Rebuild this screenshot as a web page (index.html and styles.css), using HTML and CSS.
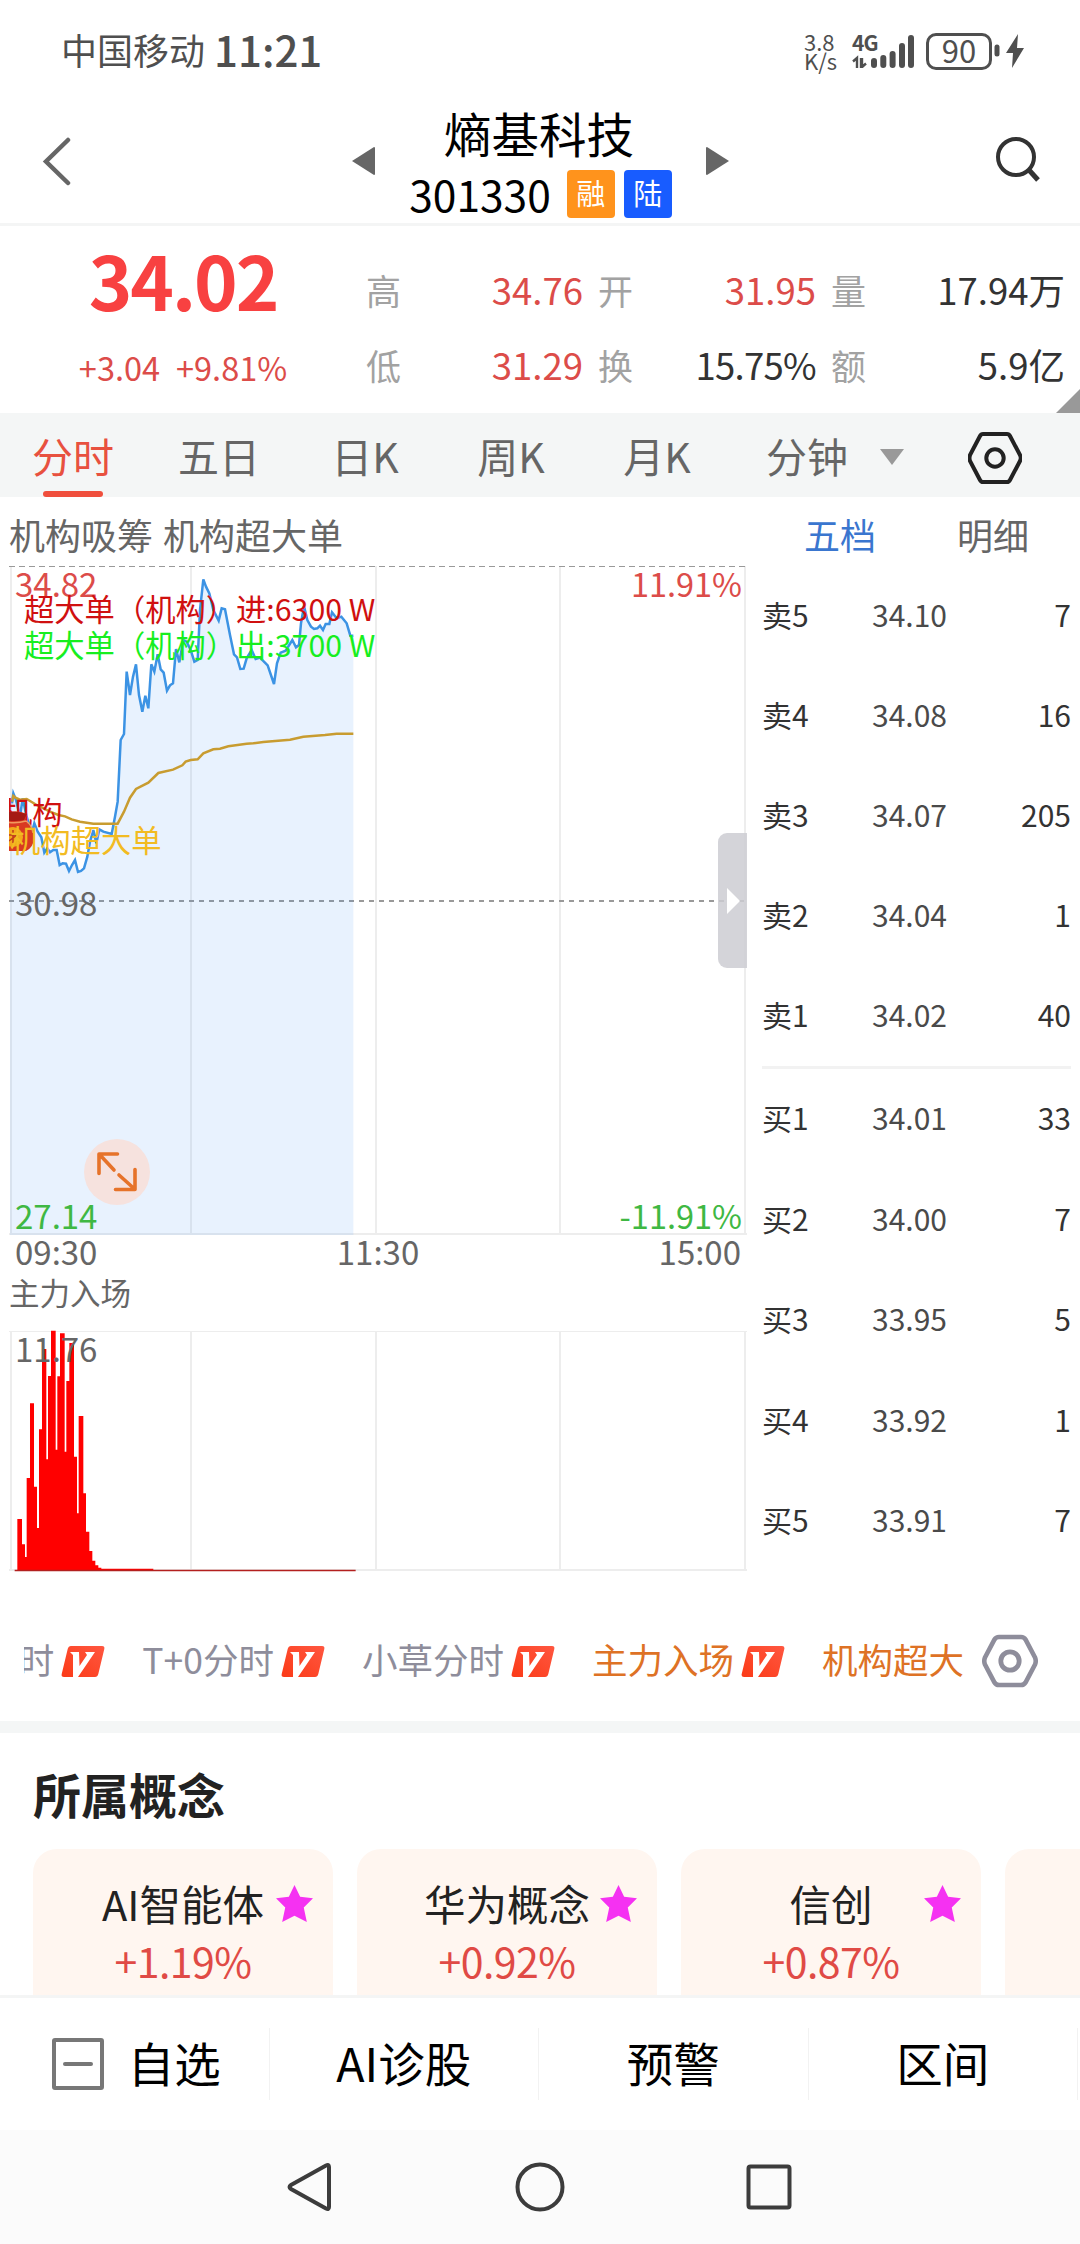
FILE: index.html
```html
<!DOCTYPE html>
<html lang="zh-CN">
    <head>
        <meta charset="utf-8" />
        <title>熵基科技 301330</title>
        <link rel="stylesheet" href="styles.css">
    </head>
    <body>
        <!-- 状态栏 -->
        <div class="status-bar">
            <span class="carrier">中国移动</span>
            <span class="time">11:21</span>
            <div class="speed"><span>3.8</span><span>K/s</span></div>
            <svg class="signal" width="64" height="38" viewBox="0 0 64 38">
                <text x="0" y="17" class="net">4G</text>
                <path d="M1 27.500l4-3.500v10M9 24v10M10 34V24M10 33l4-3.500" fill="none" stroke="#4f4f4f" stroke-width="2.400"/>
                <path d="M22 27v4M31.300 24v7M40.600 20v11M50 12v19M59 4v27" stroke="#4f4f4f" stroke-width="6" stroke-linecap="round"/>
            </svg>
            <div class="battery">90</div>
            <svg class="charge" width="30" height="36" viewBox="0 0 30 36">
                <path d="M3 14v7" stroke="#4f4f4f" stroke-width="5" stroke-linecap="round"/>
                <path d="M24 1L12 20h7l-1 15 12-20h-7z" fill="#4f4f4f"/>
            </svg>
        </div>

        <!-- 标题 -->
        <div class="header">
            <svg class="back" width="30" height="50" viewBox="0 0 30 50">
                <path d="M26 4L4 25.500 26 47" fill="none" stroke="#666" stroke-width="4.500" stroke-linecap="round"/>
            </svg>
            <svg class="prev" width="24" height="30" viewBox="0 0 24 30"><path d="M0 15L22 1q1 0 1 1v26q0 1-1 1z" fill="#666"/></svg>
            <div class="stock">
                <div class="stock-name">熵基科技</div>
                <div class="stock-code">301330<span class="badge orange">融</span><span class="badge blue">陆</span></div>
            </div>
            <svg class="next" width="24" height="30" viewBox="0 0 24 30"><path d="M24 15L2 1Q1 1 1 2v26q0 1 1 1z" fill="#666"/></svg>
            <svg class="search" width="46" height="46" viewBox="0 0 46 46">
                <circle cx="21" cy="20" r="18" fill="none" stroke="#333" stroke-width="4"/>
                <path d="M34 33l9 10" stroke="#333" stroke-width="5"/>
            </svg>
        </div>

        <!-- 行情 -->
        <div class="quote">
            <div class="price-box">
                <div class="price">34.02</div>
                <div class="change"><span>+3.04</span><span>+9.81%</span></div>
            </div>
            <div class="quote-grid">
                <div class="cell"><span class="key">高</span><span class="red">34.76</span></div>
                <div class="cell"><span class="key">开</span><span class="red">31.95</span></div>
                <div class="cell"><span class="key">量</span><span>17.94万</span></div>
                <div class="cell"><span class="key">低</span><span class="red">31.29</span></div>
                <div class="cell"><span class="key">换</span><span class="turnover">15.75%</span></div>
                <div class="cell"><span class="key">额</span><span>5.9亿</span></div>
            </div>
            <div class="corner"></div>
        </div>

        <!-- 周期切换 -->
        <div class="period-tabs">
            <div class="tab active">分时</div>
            <div class="tab">五日</div>
            <div class="tab">日K</div>
            <div class="tab">周K</div>
            <div class="tab">月K</div>
            <div class="tab minute">分钟<i class="arrow-down"></i></div>
            <svg class="setting" width="54" height="54" viewBox="0 0 54 54">
                <path d="M15 3h24q2 0 3 2l10 19q1.500 3 0 6L42 49q-1 2-3 2H15q-2 0-3-2L2 30q-1-3 0-6L12 5q1-2 3-2z" fill="none" stroke="#222" stroke-width="4"/>
                <circle cx="27" cy="27" r="8.700" fill="none" stroke="#222" stroke-width="4"/>
            </svg>
        </div>

        <div class="main">
            <div class="chart-col">
                <div class="indicator">机构吸筹 机构超大单</div>
                <!-- 分时图 -->
                <div class="chart-wrap">
                    <svg class="price-chart" width="747" height="672" viewBox="0 564 747 672">
                        <g stroke="#ededed" stroke-width="2">
                            <path d="M11 566v668M191 566v668M376 566v668M560 566v668M745 566v668M9 1234h738"/>
                        </g>
                        <path d="M9 566.500H747" stroke="#999" stroke-width="1.200" stroke-dasharray="6 4"/>
                        <path d="M9 901H747" stroke="#999" stroke-width="2" stroke-dasharray="5 5"/>
                        <g transform="translate(0 550) scale(.33333)">
                            <path class="area" d="M30 760L40 730 48 750 60 800 68 745 80 800 95 850 103 820 113 845 124 862 133 908 142 895 150 907 160 900 170 900 179 945 188 940 198 941 207 963 216 945 225 930 234 966 243 963 252 955 262 920 270 875 280 840 289 880 298 838 310 845 335 852 345 800 353 755 362 570 372 552 380 365 390 435 399 380 408 343 417 435 427 485 436 437 445 475 454 343 463 365 473 313 482 358 491 368 501 422 510 406 519 400 528 297 538 337 550 270 560 275 572 300 583 335 593 330 600 180 610 88 618 110 628 130 640 180 656 212 665 175 675 178 690 255 702 313 711 322 721 357 731 356 740 325 755 300 767 327 780 323 803 346 822 402 831 340 842 308 857 302 877 270 888 292 897 285 903 220 912 168 922 210 933 230 942 237 952 235 960 227 969 240 977 222 988 222 996 187 1010 205 1024 200 1040 220 1051 257 1060 257V2055H30z"/>
                            <path class="price-line" d="M36 760L40 730 48 750 60 800 68 745 80 800 95 850 103 820 113 845 124 862 133 908 142 895 150 907 160 900 170 900 179 945 188 940 198 941 207 963 216 945 225 930 234 966 243 963 252 955 262 920 270 875 280 840 289 880 298 838 310 845 335 852 345 800 353 755 362 570 372 552 380 365 390 435 399 380 408 343 417 435 427 485 436 437 445 475 454 343 463 365 473 313 482 358 491 368 501 422 510 406 519 400 528 297 538 337 550 270 560 275 572 300 583 335 593 330 600 180 610 88 618 110 628 130 640 180 656 212 665 175 675 178 690 255 702 313 711 322 721 357 731 356 740 325 755 300 767 327 780 323 803 346 822 402 831 340 842 308 857 302 877 270 888 292 897 285 903 220 912 168 922 210 933 230 942 237 952 235 960 227 969 240 977 222 988 222 996 187 1010 205 1024 200 1040 220 1051 257 1060 257"/>
                            <path class="avg-line" d="M36 755L40 738 48 744 60 749 80 747 110 765 150 785 175 795 195 799 215 808 240 815 280 821 353 821 372 785 390 743 408 717 445 698 475 669 519 659 547 646 557 635 572 630 593 628 610 610 640 598 660 596 685 589 740 581 760 580 790 576 870 569 910 560 975 555 1010 551 1060 551"/>
                        </g>
                        <text x="15" y="597" class="axis up">34.82</text>
                        <text x="742" y="597" class="axis up end">11.91%</text>
                        <text x="15" y="916" class="axis">30.98</text>
                        <text x="15" y="1229" class="axis down">27.14</text>
                        <text x="742" y="1229" class="axis down end">-11.91%</text>
                        <text x="24" y="621" class="tip" fill="#d01010">超大单（机构）进:6300 W</text>
                        <text x="24" y="657" class="tip" fill="#17ee1f">超大单（机构）出:3700 W</text>
                        <!-- 左侧福袋，超出图表部分裁掉 -->
                        <clipPath id="plot"><path d="M9 564H747V1236H9z"/></clipPath>
                        <g clip-path="url(#plot)">
                            <text x="2" y="824" class="tip" fill="#d01010">机构</text>
                            <path d="M2 813q4-2 8-1 8-2 17 2l-2 7q9 6 9 16 0 10-8 14H2z" fill="#d93a22"/>
                            <path d="M4 813q10-3 23 1l-3 6q-9 2-20 0z" fill="#a51a14"/>
                            <path d="M6 822q10 2 20-1 6 4 7 12" fill="none" stroke="#f19a5e" stroke-width="1.500"/>
                            <circle cx="13" cy="837" r="10" fill="#f3a81c"/>
                            <path d="M9 835h9M13 830v13M9 841l8-6M18 831v11" stroke="#c0391c" stroke-width="1.500"/>
                            <text x="10" y="852" class="tip" fill="#f2bb22">机构超大单</text>
                        </g>
                        <circle cx="117" cy="1172" r="33" fill="#f6e2de"/>
                        <path d="M117.500 1154H99v19.500M100 1155l14 15M115.500 1189.500H135v-20M134 1188.500l-15-13.500" fill="none" stroke="#e6732a" stroke-width="3.600" stroke-linecap="round" stroke-linejoin="round"/>
                    </svg>
                    <div class="drawer"><i></i></div>
                </div>
                <div class="time-axis"><span>09:30</span><span class="mid">11:30</span><span>15:00</span></div>
                <div class="sub-title">主力入场</div>
                <!-- 主力入场柱图 -->
                <svg class="volume-chart" width="747" height="256" viewBox="0 1318 747 256">
                    <path d="M11 1331v239M191 1331v239M376 1331v239M560 1331v239M745 1331v239M9 1570h738" stroke="#ededed" stroke-width="2"/>
                    <path d="M9 1331.500h738" stroke="#ededed"/>
                    <g transform="translate(0 1100) scale(.33333)">
                        <path fill="#f00" d="M52 1412V1257H66V1333H75V1371H80V1134H90V910H102V1160H111V1284H117V988H126V747H139V1078H144V828H153V692H167V1049H172V829H180V700H194V1055H199V843H208V729H222V1070H231V1240H236V948H250V1180H258V1295H268V1353H277V1382H286V1396H295V1403H304V1406H460V1412z"/>
                        <path d="M44 1411.500H1067" stroke="#b3201f" stroke-width="4"/>
                    </g>
                    <text x="15" y="1362" class="axis">11.76</text>
                </svg>
            </div>

            <!-- 五档 -->
            <div class="order-book">
                <div class="book-tabs"><span class="on">五档</span><span>明细</span></div>
                <div class="level"><span>卖5</span><span class="p">34.10</span><span>7</span></div>
                <div class="level"><span>卖4</span><span class="p">34.08</span><span>16</span></div>
                <div class="level"><span>卖3</span><span class="p">34.07</span><span>205</span></div>
                <div class="level"><span>卖2</span><span class="p">34.04</span><span>1</span></div>
                <div class="level"><span>卖1</span><span class="p">34.02</span><span>40</span></div>
                <div class="split"></div>
                <div class="level buy"><span>买1</span><span class="p">34.01</span><span>33</span></div>
                <div class="level buy"><span>买2</span><span class="p">34.00</span><span>7</span></div>
                <div class="level buy"><span>买3</span><span class="p">33.95</span><span>5</span></div>
                <div class="level buy"><span>买4</span><span class="p">33.92</span><span>1</span></div>
                <div class="level buy"><span>买5</span><span class="p">33.91</span><span>7</span></div>
            </div>
        </div>

        <!-- 指标切换 -->
        <svg width="0" height="0" class="defs">
            <linearGradient id="vip" x1="0" y1="1" x2="1" y2="0"><stop offset="0" stop-color="#fb3a17"/><stop offset="1" stop-color="#ff5740"/></linearGradient>
            <symbol id="v" viewBox="0 0 44 31">
                <path d="M10 0h31q3 0 2.300 3l-6 25q-.7 3-3.300 3H3q-3 0-2.300-3l6-25Q7.500 0 10 0z" fill="url(#vip)"/>
                <path d="M9 6h9l.5 14L26 9l-2-3h10L17 31h-5V9z" fill="#fff"/>
            </symbol>
        </svg>
        <div class="functions">
            <div class="func-list">
                <div class="func cut"><span>时</span><svg width="44" height="31"><use href="#v"/></svg></div>
                <div class="func"><span>T+0分时</span><svg width="44" height="31"><use href="#v"/></svg></div>
                <div class="func"><span>小草分时</span><svg width="44" height="31"><use href="#v"/></svg></div>
                <div class="func on"><span>主力入场</span><svg width="44" height="31"><use href="#v"/></svg></div>
                <div class="func on"><span>机构超大</span></div>
            </div>
            <svg class="setting2" width="56" height="54" viewBox="0 0 56 54">
                <path d="M17 3h22q3 0 4.500 2.500l9.500 18q1.500 3.500 0 7l-9.500 18Q42 51 39 51H17q-3 0-4.500-2.500l-9.500-18q-1.500-3.500 0-7l9.500-18Q14 3 17 3z" fill="none" stroke="#8e8d9b" stroke-width="4.600"/>
                <circle cx="28" cy="27" r="9.200" fill="none" stroke="#8e8d9b" stroke-width="4.800"/>
            </svg>
        </div>

        <!-- 所属概念 -->
        <div class="concept">
            <h2>所属概念</h2>
            <div class="cards">
                <div class="card">
                    <div class="name">AI智能体</div><div class="rate">+1.19%</div>
                    <svg class="star" viewBox="0 0 36 36"><path d="M18 0l5.500 11.500L36 13l-9 9 3 14-12-6-12 6 3-14-9-9 12.500-1.500z"/></svg>
                </div>
                <div class="card">
                    <div class="name">华为概念</div><div class="rate">+0.92%</div>
                    <svg class="star" viewBox="0 0 36 36"><path d="M18 0l5.500 11.500L36 13l-9 9 3 14-12-6-12 6 3-14-9-9 12.500-1.500z"/></svg>
                </div>
                <div class="card">
                    <div class="name">信创</div><div class="rate">+0.87%</div>
                    <svg class="star" viewBox="0 0 36 36"><path d="M18 0l5.500 11.500L36 13l-9 9 3 14-12-6-12 6 3-14-9-9 12.500-1.500z"/></svg>
                </div>
                <div class="card"></div>
            </div>
        </div>

        <!-- 底部操作 -->
        <div class="footer">
            <div class="action">
                <svg class="minus" width="54" height="54" viewBox="0 0 54 54">
                    <rect x="3" y="3" width="48" height="48" rx="1" fill="none" stroke="#777" stroke-width="4"/>
                    <path d="M14 27h26" stroke="#777" stroke-width="4" stroke-linecap="round"/>
                </svg>自选
            </div>
            <div class="action">AI诊股</div>
            <div class="action">预警</div>
            <div class="action">区间</div>
        </div>

        <!-- 系统导航 -->
        <div class="nav-bar">
            <svg width="50" height="50" viewBox="0 0 50 50"><path d="M40 3.500q3-1.500 3 1.500v40q0 3-3 1.500L5 27q-3-2 0-4z"/></svg>
            <svg width="50" height="50" viewBox="0 0 50 50"><circle cx="25" cy="25" r="22.500"/></svg>
            <svg width="50" height="50" viewBox="0 0 50 50"><rect x="4.500" y="4.500" width="41" height="41" rx="2"/></svg>
        </div>
    </body>
</html>
```
FILE: styles.css
```css
body {
    margin: 0;
    width: 1080px;
    height: 2244px;
    overflow: hidden;
    background-color: #fff;
    color: #333;
    font-family: "Noto Sans CJK SC", "Noto Sans", sans-serif;
}

svg {
    display: block;
    flex: none;
}

/* 状态栏 */
.status-bar {
    display: flex;
    align-items: center;
    height: 98px;
    padding-left: 61px;
    color: #4f4f4f;
    line-height: 98px;
}

.carrier {
    font-size: 36px;
}

.time {
    font-size: 42px;
    font-weight: 500;
    margin-left: 9px;
    width: 590px;
}

.speed {
    display: flex;
    flex-direction: column;
    width: 48px;
    padding-top: 3px;
    font-size: 22px;
    line-height: 19px;
}

.signal {
    margin-top: 7px;
    overflow: visible;
}

.signal .net {
    font-size: 21px;
    font-weight: bold;
    fill: #4f4f4f;
    letter-spacing: -1px;
}

.battery {
    box-sizing: border-box;
    width: 66px;
    height: 37px;
    margin: 4px 2px 0 10px;
    border: 3px solid #4f4f4f;
    border-radius: 10px;
    text-align: center;
    font-size: 31px;
    line-height: 27px;
}

.charge {
    margin-top: 4px;
}

/* 标题 */
.header {
    display: flex;
    align-items: center;
    height: 125px;
    border-bottom: 3px solid #f4f5f5;
    color: #000;
}

.back {
    margin-left: 42px;
    width: 30px;
}

.prev {
    margin-left: 280px;
}

.stock {
    width: 329px;
    height: 120px;
    padding-top: 5px;
    text-align: center;
}

.stock-name {
    margin-left: -3px;
    font-size: 47.500px;
    line-height: 60px;
}

.stock-code {
    display: flex;
    align-items: center;
    justify-content: center;
    font-size: 42.500px;
    line-height: 61px;
}

.badge {
    width: 48px;
    height: 48px;
    margin: 1px 0 0 9px;
    border-radius: 4px;
    color: #fff;
    font-size: 29px;
    line-height: 45px;
}

.badge.orange {
    margin-left: 16px;
    background-color: #ff931c;
}

.badge.blue {
    background-color: #185cff;
}

.search {
    margin: -2px 0 0 266px;
}

/* 行情 */
.quote {
    position: relative;
    display: flex;
    height: 187px;
}

.price-box {
    width: 366px;
    padding-top: 3px;
    text-align: center;
}

.price {
    font-size: 74px;
    font-weight: bold;
    line-height: 100px;
    letter-spacing: -2px;
    color: #f84141;
}

.change {
    display: flex;
    justify-content: center;
    gap: 16px;
    font-size: 32.500px;
    line-height: 76px;
    color: #dc4c49;
}

.quote-grid {
    display: grid;
    grid-template-columns: 217px 218px 234px;
    grid-template-rows: 75px 75px;
    column-gap: 15px;
    padding-top: 26px;
    font-size: 36.500px;
    line-height: 75px;
    color: #333;
}

.cell {
    display: flex;
    justify-content: space-between;
}

.key {
    font-size: 35px;
    color: #a2a2a2;
}

.red {
    color: #dc4c49;
}

.turnover {
    letter-spacing: -0.7px;
}

.corner {
    position: absolute;
    right: 0;
    bottom: 0;
    border-left: 24px solid transparent;
    border-bottom: 24px solid #999;
}

/* 周期切换 */
.period-tabs {
    display: flex;
    align-items: center;
    height: 84px;
    background-color: #f4f6f6;
    color: #666;
    font-size: 41px;
    line-height: 86px;
}

.tab {
    position: relative;
    width: 146px;
    text-align: center;
}

.tab.active {
    color: #e8513f;
}

.tab.active::after {
    content: "";
    position: absolute;
    left: 43px;
    bottom: 1px;
    width: 60px;
    height: 6px;
    border-radius: 3px;
    background-color: #f04f3d;
}

.tab.minute {
    display: flex;
    align-items: center;
    width: 202px;
    padding-left: 36px;
}

.arrow-down {
    margin: 4px 0 0 32px;
    border: 12px solid transparent;
    border-top: 16px solid #999;
    border-bottom: 0;
}

.setting {
    margin-top: 5px;
}

/* 图表区 */
.main {
    display: flex;
    height: 1077px;
}

.chart-col {
    width: 747px;
}

.indicator {
    height: 60px;
    padding: 7px 0 0 9px;
    font-size: 36px;
    line-height: 61px;
    word-spacing: 2px;
    color: #666;
}

.chart-wrap {
    position: relative;
}

.price-line {
    fill: none;
    stroke: #3c93e4;
    stroke-width: 7.500;
}

.avg-line {
    fill: none;
    stroke: #c89c30;
    stroke-width: 7.500;
}

.area {
    fill: rgba(50, 135, 250, 0.11);
}

.axis {
    font-size: 33px;
    fill: #666;
}

.axis.up {
    fill: #dc4c49;
}

.axis.down {
    fill: #3fb843;
}

.axis.end {
    text-anchor: end;
    font-size: 32.500px;
}

.tip {
    font-size: 30.300px;
}

.drawer {
    position: absolute;
    right: 0;
    top: 269px;
    display: flex;
    align-items: center;
    width: 29px;
    height: 135px;
    border-radius: 9px 0 0 9px;
    background-color: rgba(205, 204, 210, 0.85);
}

.drawer i {
    margin-left: 9px;
    border: 13px solid transparent;
    border-left-color: #fff;
    border-right: 0;
}

.time-axis {
    display: flex;
    justify-content: space-between;
    height: 28px;
    padding: 0 6px 0 15px;
    font-size: 33px;
    line-height: 31px;
    color: #666;
}

.sub-title {
    height: 54px;
    padding-left: 9px;
    font-size: 30.500px;
    line-height: 56px;
    color: #666;
}

/* 五档 */
.order-book {
    width: 309px;
    padding: 0 9px 0 15px;
}

.book-tabs {
    display: flex;
    height: 60px;
    padding: 7px 0 0 42px;
    gap: 81px;
    font-size: 36px;
    line-height: 61px;
    color: #666;
}

.book-tabs .on {
    color: #3a76cf;
}

.level {
    display: grid;
    grid-template-columns: 110px 90px 1fr;
    height: 100px;
    line-height: 101px;
    font-size: 30px;
    color: #333;
}

.level.buy {
    height: 100.500px;
}

.level .p {
    color: #4a4a4a;
}

.level span:last-child {
    text-align: right;
}

.split {
    height: 3px;
    margin: 2px 0 -2px;
    background-color: #f2f2f2;
}

/* 指标切换 */
.defs {
    position: absolute;
}

.functions {
    display: flex;
    align-items: center;
    height: 124px;
    padding-top: 23px;
    border-bottom: 12px solid #f4f6f6;
    font-size: 35.500px;
    color: #8e8d9b;
}

.func-list {
    display: flex;
    justify-content: flex-end;
    gap: 37px;
    width: 940px;
    margin-left: 24px;
    overflow: hidden;
    line-height: 62px;
}

.func {
    display: flex;
    flex: none;
    align-items: center;
    gap: 7px;
}

.func svg {
    margin-top: 4px;
}

.func.on {
    color: #de7225;
}

.setting2 {
    margin: 4px 0 0 18px;
}

/* 所属概念 */
.concept {
    height: 262px;
    overflow: hidden;
}

.concept h2 {
    height: 116px;
    margin: 0;
    padding-left: 33px;
    font-size: 48px;
    line-height: 120px;
    color: #222;
}

.cards {
    display: flex;
    gap: 24px;
    padding-left: 33px;
}

.card {
    position: relative;
    flex: none;
    width: 300px;
    height: 180px;
    border-radius: 24px;
    background-color: #fff6f0;
    text-align: center;
}

.name {
    padding-top: 24px;
    font-size: 41.500px;
    line-height: 60px;
    color: #222;
}

.rate {
    font-size: 41px;
    line-height: 54px;
    letter-spacing: -0.5px;
    color: #e04a45;
}

.star {
    position: absolute;
    top: 36px;
    right: 20px;
    width: 37px;
    height: 37px;
    fill: #f531f2;
}

/* 底部操作 */
.footer {
    display: flex;
    align-items: center;
    height: 132px;
    border-top: 3px solid #f4f5f5;
    background-color: #fff;
    color: #000;
    font-size: 46.500px;
}

.action {
    display: flex;
    align-items: center;
    justify-content: center;
    box-sizing: border-box;
    width: 269.500px;
    height: 72px;
    border-right: 1px solid #f2f2f2;
    line-height: 66px;
    padding-bottom: 5px;
}

.minus {
    margin: 5px 23px 0 3px;
}

/* 系统导航 */
.nav-bar {
    display: flex;
    justify-content: center;
    gap: 179px;
    height: 82px;
    padding-top: 32px;
    background-color: #fbfbfb;
}

.nav-bar svg {
    fill: none;
    stroke: #3c3c3c;
    stroke-width: 4;
}
```
